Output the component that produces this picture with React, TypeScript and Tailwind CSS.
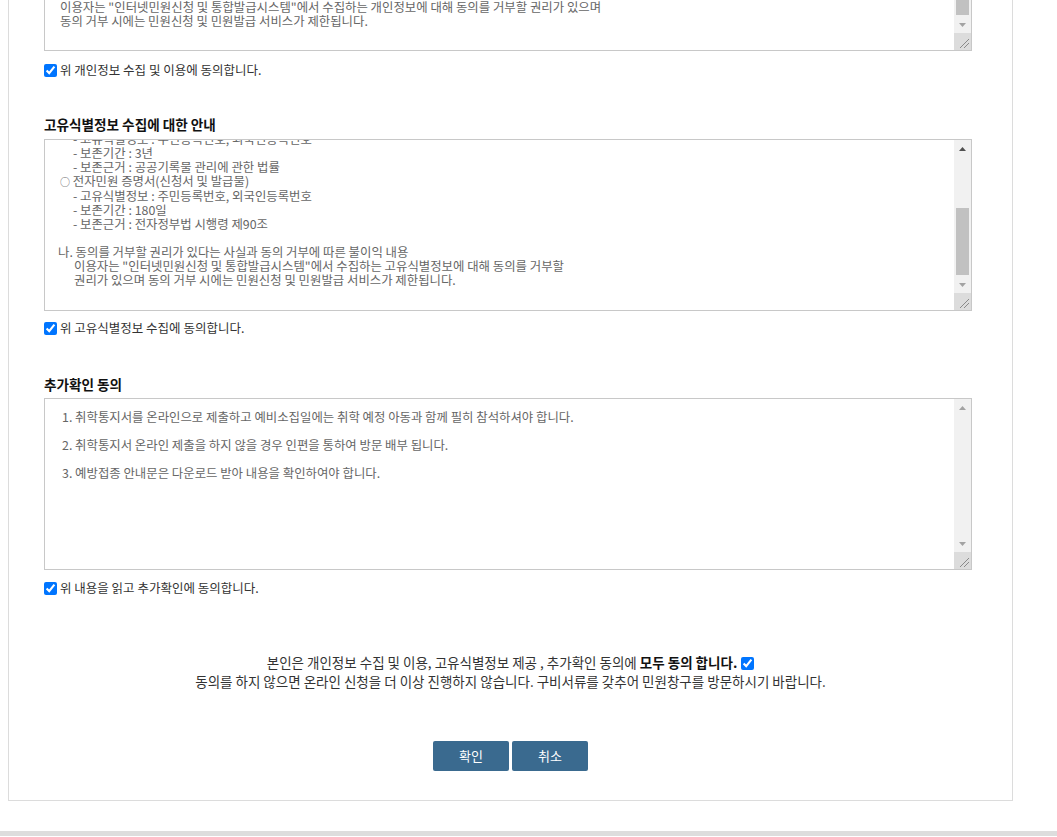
import type { ReactNode } from 'react';

const Arrow = ({ up, active }: { up?: boolean; active?: boolean }) => (
  <div className="flex h-[17px] items-center justify-center">
    <svg width="7" height="4" viewBox="0 0 7 4">
      <polygon
        points={up ? '3.5,0 7,4 0,4' : '0,0 7,0 3.5,4'}
        fill={active ? '#505050' : '#a3a3a3'}
      />
    </svg>
  </div>
);

const Scrollbar = ({ thumb, upActive }: { thumb?: number; upActive?: boolean }) => (
  <div className="flex w-[17px] flex-col bg-[#f1f1f1]">
    <Arrow up active={upActive} />
    <div className="flex flex-1 flex-col justify-end">
      {thumb ? <div className="mx-[2px] mb-[1px] bg-[#c1c1c1]" style={{ height: thumb }} /> : null}
    </div>
    <Arrow />
    {/* resize corner */}
    <div className="flex h-[17px] items-end justify-end bg-[#dcdcdc]">
      <svg width="12" height="12" viewBox="0 0 12 12" className="mb-[1px] mr-[1px]">
        <line x1="11" y1="2" x2="2" y2="11" stroke="#8a8a8a" strokeWidth="1" />
        <line x1="11" y1="6" x2="6" y2="11" stroke="#8a8a8a" strokeWidth="1" />
      </svg>
    </div>
  </div>
);

const TextBox = ({
  children,
  thumb,
  upActive,
  className = '',
}: {
  children: ReactNode;
  thumb?: number;
  upActive?: boolean;
  className?: string;
}) => (
  <div className="flex h-[172px] w-[928px] border border-[#c8c8c8] bg-white">
    <div className={`flex-1 overflow-hidden text-[12.4px] leading-[14px] text-[#666] ${className}`}>
      {children}
    </div>
    <Scrollbar thumb={thumb} upActive={upActive} />
  </div>
);

const AgreeRow = ({ label, className = '' }: { label: string; className?: string }) => (
  <label className={`flex h-[14px] items-center gap-[3px] text-[12.5px] text-[#333] ${className}`}>
    <input type="checkbox" defaultChecked className="m-0 h-[13px] w-[13px]" />
    <span>{label}</span>
  </label>
);

export default function App() {
  return (
    <div className="bg-white font-['Malgun_Gothic','Noto_Sans_CJK_KR',sans-serif] text-[#333]">
      <div className="-mt-[140px] ml-2 w-[1005px] border border-[#dcdcdc] pb-[29px] pl-[35px] pt-[18px]">
        {/* 개인정보 수집 및 이용 */}
        <TextBox thumb={72} upActive className="pl-[15px] pt-[120px]">
          <p>이용자는 "인터넷민원신청 및 통합발급시스템"에서 수집하는 개인정보에 대해 동의를 거부할 권리가 있으며</p>
          <p>동의 거부 시에는 민원신청 및 민원발급 서비스가 제한됩니다.</p>
        </TextBox>
        <AgreeRow className="mt-[12px]" label="위 개인정보 수집 및 이용에 동의합니다." />

        {/* 고유식별정보 */}
        <h3 className="mt-[38px] text-[13.6px] font-bold leading-[18px] text-[#111]">고유식별정보 수집에 대한 안내</h3>
        <div className="mt-[6px]">
          <TextBox thumb={67} upActive className="pl-[13px]">
            <div className="-mt-[8px]">
              <p className="pl-[15px]">- 고유식별정보 : 주민등록번호, 외국인등록번호</p>
              <p className="pl-[15px]">- 보존기간 : 3년</p>
              <p className="pl-[15px]">- 보존근거 : 공공기록물 관리에 관한 법률</p>
              <p className="pl-[2px]">
                <span className="text-[10px]">○</span> 전자민원 증명서(신청서 및 발급물)
              </p>
              <p className="pl-[15px]">- 고유식별정보 : 주민등록번호, 외국인등록번호</p>
              <p className="pl-[15px]">- 보존기간 : 180일</p>
              <p className="pl-[15px]">- 보존근거 : 전자정부법 시행령 제90조</p>
              <p className="h-[14px]" />
              <p>나. 동의를 거부할 권리가 있다는 사실과 동의 거부에 따른 불이익 내용</p>
              <p className="pl-[16px]">
                이용자는 "인터넷민원신청 및 통합발급시스템"에서 수집하는 고유식별정보에 대해 동의를 거부할
              </p>
              <p className="pl-[16px]">권리가 있으며 동의 거부 시에는 민원신청 및 민원발급 서비스가 제한됩니다.</p>
            </div>
          </TextBox>
        </div>
        <AgreeRow className="mt-[10px]" label="위 고유식별정보 수집에 동의합니다." />

        {/* 추가확인 */}
        <h3 className="mt-[40px] text-[13.6px] font-bold leading-[18px] text-[#111]">추가확인 동의</h3>
        <div className="mt-[5px]">
          <TextBox className="pl-[17px] pt-[11px]">
            <p>1. 취학통지서를 온라인으로 제출하고 예비소집일에는 취학 예정 아동과 함께 필히 참석하셔야 합니다.</p>
            <p className="h-[14px]" />
            <p>2. 취학통지서 온라인 제출을 하지 않을 경우 인편을 통하여 방문 배부 됩니다.</p>
            <p className="h-[14px]" />
            <p>3. 예방접종 안내문은 다운로드 받아 내용을 확인하여야 합니다.</p>
          </TextBox>
        </div>
        <AgreeRow className="mt-[11px]" label="위 내용을 읽고 추가확인에 동의합니다." />

        {/* 전체 동의 */}
        <div className="-ml-[35px] mt-[58px] text-center text-[13.5px] leading-[19px] text-[#333]">
          <p>
            본인은 개인정보 수집 및 이용, 고유식별정보 제공 , 추가확인 동의에{' '}
            <b className="font-semibold text-[#111]">모두 동의 합니다.</b>
            <input type="checkbox" defaultChecked className="ml-[4px] h-[13px] w-[13px] align-[-2px]" />
          </p>
          <p>동의를 하지 않으면 온라인 신청을 더 이상 진행하지 않습니다. 구비서류를 갖추어 민원창구를 방문하시기 바랍니다.</p>
        </div>

        <div className="-ml-[35px] mt-[50px] flex justify-center gap-[3px]">
          <button className="h-[30px] w-[76px] rounded-[2px] bg-[#3a6a8f] text-[13px] text-white">확인</button>
          <button className="h-[30px] w-[76px] rounded-[2px] bg-[#3a6a8f] text-[13px] text-white">취소</button>
        </div>
      </div>
      <div className="mt-[30px] h-[5px] bg-[#dddddd]" />
    </div>
  );
}
